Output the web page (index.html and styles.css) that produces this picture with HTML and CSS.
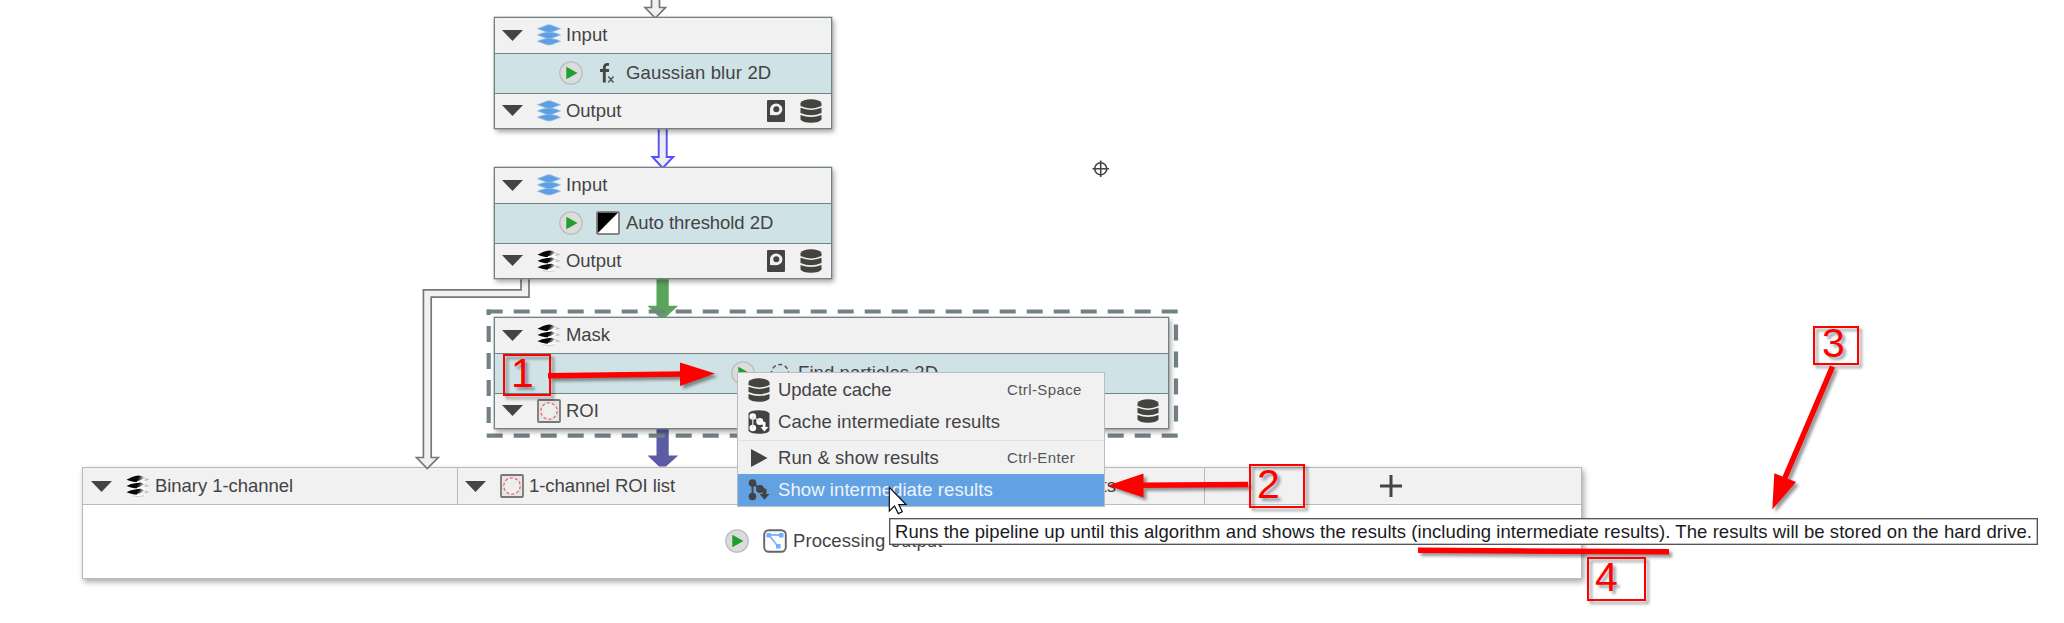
FILE: index.html
```html
<!DOCTYPE html>
<html lang="en">
<head>
<meta charset="utf-8">
<title>Pipeline graph</title>
<link rel="stylesheet" href="styles.css">
</head>
<body>
<svg class="defs" width="0" height="0" aria-hidden="true">
  <defs>
    <linearGradient id="bw" x1="0" y1="0" x2="1" y2=".12">
      <stop offset="0" stop-color="#000"/><stop offset=".55" stop-color="#0a0a0a"/><stop offset=".8" stop-color="#ddd"/><stop offset="1" stop-color="#b5b5b5"/>
    </linearGradient>
    <symbol id="tri-down" viewBox="0 0 21 11"><path d="M0 0H21L10.5 11Z" fill="#444"/></symbol>
    <symbol id="layers" viewBox="0 0 24 22">
      <g fill="#5e9fe2" stroke="#8bbbec" stroke-width=".7">
        <path d="M.5 17.3L4 15.8 12 14 20 15.8 23.5 17.3 18 19.3Q12 22.6 6 19.3Z"/>
        <path d="M.5 11L4 9.5 12 7.5 20 9.5 23.5 11 18 13Q12 16.3 6 13Z"/>
        <path d="M.5 4.7L7 2.3Q12-.9 17 2.3L23.5 4.7 18 6.7Q12 10 6 6.7Z"/>
      </g>
    </symbol>
    <symbol id="binary" viewBox="0 0 24 22">
      <path d="M5 3Q12-2 19 3L19 20Q12 24 5 20Z" fill="#fff"/>
      <g fill="url(#bw)">
        <path d="M.5 17.3L5 15.3 14 13.5 20 15.8 23.5 17.3 18 18.6Q12 20.6 5 18.8Z"/>
        <path d="M.5 11L5 9 14 7.200 20 9.500 23.500 11 18 12.300Q12 14.300 5 12.500Z"/>
        <path d="M.5 4.700L6 2Q13-1.200 18 2.200L23.500 4.700 18 6Q12 8 5 6.200Z"/>
      </g>
      <path d="M11 7.200Q15 6.500 18.500 4M11 13.500Q15 12.800 18.500 10.300M11 19.800Q15 19.100 18.500 16.600" stroke="#fff" stroke-width="1.700" fill="none"/>
      <path d="M6 20.700Q12 22.600 18 20.700" stroke="#ccc" stroke-width="1" fill="none"/>
    </symbol>
    <symbol id="play" viewBox="0 0 24 24">
      <circle cx="12" cy="12" r="11.2" fill="#dcdcdc" stroke="#bdbdbd" stroke-width="1.3"/>
      <path d="M7.3 5.8L18.5 12 7.3 18.2Z" fill="#1f9f2c"/>
    </symbol>
    <symbol id="fx" viewBox="0 0 24 24">
      <path d="M13 3.600Q8.300 2.500 8.300 7V21.500M4 9.500H13" fill="none" stroke="#444" stroke-width="2.900"/>
      <path d="M12.300 15.500L17.500 21.500M17.500 15.500L12.300 21.500" stroke="#555" stroke-width="1.500"/>
    </symbol>
    <symbol id="threshold" viewBox="0 0 24 24">
      <rect x="1" y="1" width="22" height="22" rx="1" fill="#fff" stroke="#666" stroke-width="1.5"/>
      <path d="M1.8 1.8H22L1.8 22Z" fill="#000"/>
    </symbol>
    <symbol id="particles" viewBox="0 0 24 24"><circle cx="12" cy="12" r="8.5" fill="none" stroke="#555" stroke-width="1.6" stroke-dasharray="4 2.68" stroke-dashoffset="2"/></symbol>
    <symbol id="roi" viewBox="0 0 24 24">
      <rect x="1" y="1" width="22" height="22" rx="1" fill="#e6e6e6" stroke="#777" stroke-width="1.8"/>
      <circle cx="12" cy="12" r="8.2" fill="#eee" stroke="#e87070" stroke-width="1.3" stroke-dasharray="3.2 1.95"/>
    </symbol>
    <symbol id="rom" viewBox="0 0 18 22">
      <rect width="18" height="22" rx="1" fill="#444"/>
      <path d="M3 15V9.500A6.200 5.800 0 1 1 9.200 15.200Z" fill="#f1f1f1"/><circle cx="9.300" cy="9.300" r="3" fill="#444"/>
    </symbol>
    <symbol id="db" viewBox="0 0 22 24">
      <path d="M.5 4Q3 .3 11 .3T21.500 4V7Q11 11.800.5 7Z" fill="#43433f"/>
      <path d="M.5 8.800Q11 13 21.500 8.800V14Q11 18.500.5 14Z" fill="#43433f"/>
      <path d="M.5 16Q11 20.200 21.500 16V20.500Q19 23.800 11 23.800T.5 20.500Z" fill="#43433f"/>
    </symbol>
    <symbol id="cache-graph" viewBox="0 0 22 24">
      <path d="M.5 3.500Q2 .3 11 .3T21.500 3.500V20.500Q20 23.800 11 23.800T.5 20.500Z" fill="#434343"/>
      <g fill="#fff"><circle cx="4.800" cy="6.500" r="3.300"/><circle cx="4.800" cy="18" r="3.300"/><circle cx="11.800" cy="11.500" r="3.500"/><path d="M13.500 11.500L17.500 12V17H20.500L16.300 21.500 12.500 17H15Z"/></g>
      <path d="M4.800 6.500V18M4.800 6.500L11.800 11.500" stroke="#ddd" stroke-width="1.300"/>
    </symbol>
    <symbol id="graph" viewBox="0 0 22 24">
      <path d="M4.500 4.500V19M4.500 4.500L12 11" stroke="#434343" stroke-width="1.900"/>
      <g fill="#434343"><circle cx="4.500" cy="5" r="3.800"/><circle cx="4.500" cy="18.500" r="3.800"/><circle cx="12" cy="11" r="3.900"/><path d="M12 9L18.500 11V16H21.500L16.500 21.800 11.500 16H14.500V13Z"/></g>
    </symbol>
    <symbol id="run" viewBox="0 0 22 24"><path d="M3 3L19.500 12 3 21Z" fill="#434343"/></symbol>
    <symbol id="output" viewBox="0 0 24 24">
      <rect x="1.200" y="1.200" width="21.600" height="21.600" rx="4.500" fill="#fdfdfd" stroke="#666" stroke-width="1.900"/>
      <path d="M6 6H18M6 6L15 17.500" stroke="#86b5ff" stroke-width="1.900"/>
      <path d="M3.500 4H8V8.500H3.500ZM16 4H20.500V8.500H16ZM13 15H17.500V19.500H13Z" fill="#78acff"/>
    </symbol>
  </defs>
</svg>

<main class="canvas">
  <section class="output-panel">
    <div class="slots">
      <div class="slot"><svg class="tri"><use href="#tri-down"/></svg><svg class="ico slot-ico"><use href="#binary"/></svg><span class="tight">Binary 1-channel</span></div>
      <div class="slot slot-roi"><svg class="tri"><use href="#tri-down"/></svg><svg class="ico ico-sq"><use href="#roi"/></svg><span class="tight">1-channel ROI list</span></div>
      <div class="slot slot-results"><span>Measurements</span></div>
      <div class="slot slot-add"><svg class="plus" viewBox="0 0 22 22"><path d="M11 0V22M0 11H22" stroke="#444" stroke-width="3"/></svg></div>
    </div>
    <div class="panel-body"><svg class="ico-sq"><use href="#play"/></svg><svg class="ico-sq"><use href="#output"/></svg><span>Processing output</span></div>
  </section>

  <svg class="edges" viewBox="0 0 2064 623">
    <g fill="#f1f1f1" stroke="#777" stroke-width="1.700">
      <path d="M651.500-2V7.500H645L655.300 18 665.500 7.500H659.500V-2"/>
      <path d="M521 279V289.800H423.400V457.500H416.500L427.300 468.500 438.200 457.500H431.200V297.200H529V279"/>
    </g>
    <path d="M658.700 128V157H652.500L662.700 168 673.200 157H666.700V128" fill="#eee" stroke="#5050ff" stroke-width="1.900"/>
    <path d="M656.500 279H668.700V305.700H678.200L666 317H659L647.500 305.700H656.500Z" fill="#5ba55b"/>
    <path d="M656.500 429H668.700V455.500H678.200L666 466.500H659L647.500 455.500H656.500Z" fill="#5b5ba6"/>
    <g fill="none" stroke="#728184" stroke-width="4.200" stroke-dasharray="16 11">
      <path d="M486.700 311.500H1178.300"/><path d="M486.700 435.700H1178.300"/>
      <path d="M488.700 309.400V315M488.700 326V424"/><path d="M1176 324.500V424"/>
    </g>
    <g fill="none" stroke="#444" stroke-width="1.600"><circle cx="1100.700" cy="168.700" r="6"/><path d="M1092.500 168.700H1109M1100.700 160.500V177"/></g>
  </svg>

  <section class="node node-gaussian">
    <div class="slot"><svg class="tri"><use href="#tri-down"/></svg><svg class="ico slot-ico"><use href="#layers"/></svg><span>Input</span></div>
    <div class="algorithm"><svg class="ico-sq"><use href="#play"/></svg><svg class="ico-sq"><use href="#fx"/></svg><span class="loose">Gaussian blur 2D</span></div>
    <div class="slot"><svg class="tri"><use href="#tri-down"/></svg><svg class="ico slot-ico"><use href="#layers"/></svg><span class="tight">Output</span><svg class="rom"><use href="#rom"/></svg><svg class="db"><use href="#db"/></svg></div>
  </section>
  <section class="node node-threshold">
    <div class="slot"><svg class="tri"><use href="#tri-down"/></svg><svg class="ico slot-ico"><use href="#layers"/></svg><span>Input</span></div>
    <div class="algorithm"><svg class="ico-sq"><use href="#play"/></svg><svg class="ico-sq"><use href="#threshold"/></svg><span class="tight">Auto threshold 2D</span></div>
    <div class="slot"><svg class="tri"><use href="#tri-down"/></svg><svg class="ico slot-ico"><use href="#binary"/></svg><span class="tight">Output</span><svg class="rom"><use href="#rom"/></svg><svg class="db"><use href="#db"/></svg></div>
  </section>
  <section class="node node-particles">
    <div class="slot"><svg class="tri"><use href="#tri-down"/></svg><svg class="ico slot-ico"><use href="#binary"/></svg><span class="tight">Mask</span></div>
    <div class="algorithm"><svg class="ico-sq"><use href="#play"/></svg><svg class="ico-sq"><use href="#particles"/></svg><span>Find particles 2D</span></div>
    <div class="slot"><svg class="tri"><use href="#tri-down"/></svg><svg class="ico ico-sq"><use href="#roi"/></svg><span class="tight">ROI</span><svg class="db db-only"><use href="#db"/></svg></div>
  </section>

  <menu class="menu">
    <li><svg><use href="#db"/></svg><span class="tight">Update cache</span><kbd>Ctrl-Space</kbd></li>
    <li><svg><use href="#cache-graph"/></svg><span>Cache intermediate results</span></li>
    <li class="separator"></li>
    <li><svg><use href="#run"/></svg><span>Run &amp; show results</span><kbd>Ctrl-Enter</kbd></li>
    <li class="active"><svg><use href="#graph"/></svg><span>Show intermediate results</span></li>
  </menu>

  <div class="tooltip">Runs the pipeline up until this algorithm and shows the results (including intermediate results). The results will be stored on the hard drive.</div>

  <svg class="edges annotations" viewBox="0 0 2064 623">
    <g fill="none" stroke="#f00" stroke-width="2">
      <rect x="504" y="355" width="46" height="40"/><rect x="1250" y="465" width="54" height="42"/>
      <rect x="1814" y="327" width="44" height="37"/><rect x="1588" y="558" width="57" height="42"/>
    </g>
    <g stroke="#f00" stroke-width="5.500">
      <path d="M548 375.700L684 374"/><path d="M1248 484.500L1140 485.300"/><path d="M1832.500 366.500L1784 480"/><path d="M1418 550.300L1669 551.800"/>
    </g>
    <path d="M680 362.500L715 373.500 680 386ZM1143.500 473.500V497.500L1108 485.500ZM1774.300 473.300L1796 482 1772.300 509.500Z" fill="#f00"/>
  </svg>
  <svg class="edges" viewBox="0 0 2064 623">
    <path d="M889.300 487.300V511L894.500 506 898.300 513.600 902.300 511.800 898.800 504.500H906Z" fill="#fff" stroke="#111" stroke-width="1.200"/>
  </svg>
  <span class="mark mark-1">1</span>
  <span class="mark mark-2">2</span>
  <span class="mark mark-3">3</span>
  <span class="mark mark-4">4</span>
</main>
</body>
</html>
```
FILE: styles.css
```css
body { margin: 0; background: #fff; }
* { box-sizing: border-box; }
.defs { position: absolute; }

.canvas {
  position: relative;
  width: 2064px;
  height: 623px;
  overflow: hidden;
  font: 18.5px/22px "Liberation Sans", Arial, sans-serif;
  letter-spacing: .08px;
  color: #434346;
  white-space: nowrap;
}
.edges { position: absolute; left: 0; top: 0; width: 2064px; height: 623px; }
.annotations { filter: drop-shadow(3px 3px 1.5px rgba(0, 0, 0, .4)); }

.tri { width: 21px; height: 11px; flex: none; }
.slot-ico { width: 24px; height: 22px; flex: none; }
.ico-sq { width: 24px; height: 24px; flex: none; }
.rom { width: 18px; height: 22px; margin-left: auto; }
.db { width: 22px; height: 24px; margin-left: 15px; }
.db-only { margin-left: auto; }
.tight { letter-spacing: -.05px; }
.loose { letter-spacing: .15px; }

.slot { display: flex; align-items: center; background: #f1f1f1; }
.slot .ico { margin: 0 5px 0 14px; }

/* Algorithm nodes */
.node {
  position: absolute;
  left: 494px;
  width: 338px;
  height: 112px;
  display: flex;
  flex-direction: column;
  border: 1px solid #728184;
  box-shadow: 0 0 0 .4px #8d999b, 2px 3px 5px rgba(0, 0, 0, .35);
}
.node .slot { flex: 1; padding: 0 9px 0 7px; }
.node .algorithm {
  height: 41px;
  display: flex;
  align-items: center;
  padding-left: 64px;
  background: #cfe2e5;
  border: solid #728184;
  border-width: 1px 0;
}
.algorithm svg + svg { margin: 0 6px 0 13px; }
.node-gaussian { top: 17px; }
.node-threshold { top: 167px; }
.node-particles { top: 317px; width: 675px; }
.node-particles .algorithm { padding-left: 236px; }

/* Pipeline output panel */
.output-panel {
  position: absolute;
  left: 82px;
  top: 467px;
  width: 1500px;
  height: 112px;
  border: 1px solid #b9b9b9;
  background: #fff;
  box-shadow: 2px 3px 6px rgba(0, 0, 0, .35);
}
.slots {
  display: grid;
  grid-template-columns: 375px 374px 373px 1fr;
  height: 37px;
  border-bottom: 1px solid #bbb;
}
.slots .slot { padding-left: 8px; border-right: 1px solid #bbb; }
.slots .slot-roi { padding-left: 7px; }
.slots .slot-add { justify-content: center; padding: 0 4px 0 0; border: 0; }
.slots .slot-results { justify-content: flex-end; padding-right: 88px; }
.plus { width: 22px; height: 22px; }
.panel-body { display: flex; align-items: center; height: 71px; padding-left: 642px; }
.panel-body svg + svg { margin: 0 6px 0 14px; }

/* Context menu */
.menu {
  position: absolute;
  left: 737px;
  top: 372px;
  width: 368px;
  height: 135px;
  margin: 0;
  padding: 1px 0 0;
  list-style: none;
  background: #f1f1f1;
  border: 1px solid #b9bcc0;
}
.menu li { display: flex; align-items: center; height: 32px; padding-left: 10px; }
.menu li svg { width: 22px; height: 24px; margin-right: 8px; }
.menu kbd { margin-left: auto; width: 97px; font: 15px/22px "Liberation Sans", Arial, sans-serif; letter-spacing: .4px; color: #555; }
.menu .separator { height: 4px; padding: 0; }
.menu .separator::before { content: ""; flex: 1; height: 1px; background: #e1e1e1; }
.menu .active { background: #63a2e2; color: #edf4fc; }

.tooltip {
  position: absolute;
  left: 889px;
  top: 518px;
  width: 1149px;
  height: 27px;
  padding-left: 5px;
  line-height: 26px;
  letter-spacing: .065px;
  color: #1a1a22;
  background: #fff;
  border: 1px solid #555;
  box-shadow: inset 0 0 0 .5px #888;
}

/* Numbered annotations */
.mark { position: absolute; font-size: 41px; line-height: 46px; color: #f00; text-shadow: 3px 3px 3px rgba(0, 30, 60, .4); }
.mark-1 { left: 511px; top: 350px; }
.mark-2 { left: 1257px; top: 461px; }
.mark-3 { left: 1822px; top: 320px; }
.mark-4 { left: 1595px; top: 554px; }
```
